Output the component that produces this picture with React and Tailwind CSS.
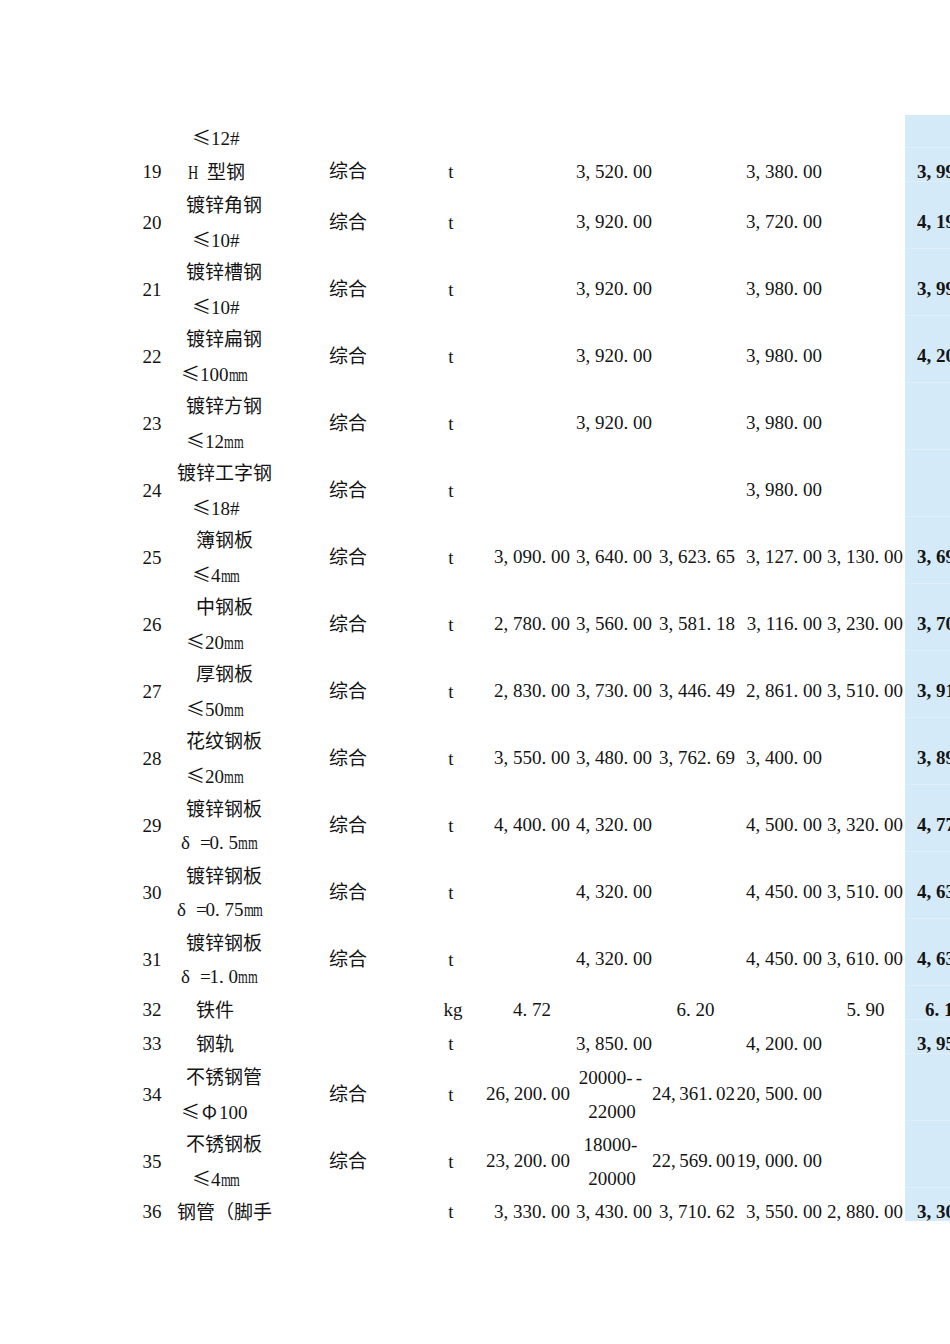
import React from "react";

// half-width / full-width glyph cells so the Latin text keeps the spreadsheet's even pitch
const Txt = ({ s }) =>
  [...s].map((ch, i) => {
    if (/[0-9]/.test(ch)) return ch;
    if (ch === "≤" || ch === "Φ")
      return (
        <span key={i} className="inline-block w-[1em] text-center font-['Noto_Sans_CJK_SC',sans-serif]">
          {ch}
        </span>
      );
    if (ch === "δ")
      return (
        <span key={i} className="inline-block w-[1em] text-left">
          {ch}
        </span>
      );
    if (ch === "m")
      return (
        <span key={i} className="inline-block w-[0.5em] scale-x-[0.66] origin-left">
          {ch}
        </span>
      );
    if (ch === "H")
      return (
        <span key={i} className="inline-block w-[0.5em] scale-x-[0.75] origin-left">
          {ch}
        </span>
      );
    if (ch.charCodeAt(0) < 128)
      return (
        <span key={i} className="inline-block w-[0.5em]">
          {ch}
        </span>
      );
    return ch;
  });

const rows = [
  { kind: "top", name: [["≤12#", "pl-[18px]"]], vals: [] },
  { no: "19", kind: "one", name: [["H 型钢", "pl-[14px]"]], spec: "综合", unit: "t", vals: [null, "3,520.00", null, "3,380.00", null], blue: "3,990.00" },
  { no: "20", kind: "two", name: [["镀锌角钢", "pl-[12px]"], ["≤10#", "pl-[18px]"]], spec: "综合", unit: "t", vals: [null, "3,920.00", null, "3,720.00", null], blue: "4,190.00" },
  { no: "21", kind: "two", name: [["镀锌槽钢", "pl-[12px]"], ["≤10#", "pl-[18px]"]], spec: "综合", unit: "t", vals: [null, "3,920.00", null, "3,980.00", null], blue: "3,990.00" },
  { no: "22", kind: "two", name: [["镀锌扁钢", "pl-[12px]"], ["≤100mm", "pl-[7px]"]], spec: "综合", unit: "t", vals: [null, "3,920.00", null, "3,980.00", null], blue: "4,200.00" },
  { no: "23", kind: "two", name: [["镀锌方钢", "pl-[12px]"], ["≤12mm", "pl-[12px]"]], spec: "综合", unit: "t", vals: [null, "3,920.00", null, "3,980.00", null] },
  { no: "24", kind: "two", name: [["镀锌工字钢", "pl-[3px]"], ["≤18#", "pl-[18px]"]], spec: "综合", unit: "t", vals: [null, null, null, "3,980.00", null] },
  { no: "25", kind: "two", name: [["簿钢板", "pl-[22px]"], ["≤4mm", "pl-[18px]"]], spec: "综合", unit: "t", vals: ["3,090.00", "3,640.00", "3,623.65", "3,127.00", "3,130.00"], blue: "3,690.00" },
  { no: "26", kind: "two", name: [["中钢板", "pl-[22px]"], ["≤20mm", "pl-[12px]"]], spec: "综合", unit: "t", vals: ["2,780.00", "3,560.00", "3,581.18", "3,116.00", "3,230.00"], blue: "3,700.00" },
  { no: "27", kind: "two", name: [["厚钢板", "pl-[22px]"], ["≤50mm", "pl-[12px]"]], spec: "综合", unit: "t", vals: ["2,830.00", "3,730.00", "3,446.49", "2,861.00", "3,510.00"], blue: "3,910.00" },
  { no: "28", kind: "two", name: [["花纹钢板", "pl-[12px]"], ["≤20mm", "pl-[12px]"]], spec: "综合", unit: "t", vals: ["3,550.00", "3,480.00", "3,762.69", "3,400.00", null], blue: "3,890.00" },
  { no: "29", kind: "two", name: [["镀锌钢板", "pl-[12px]"], ["δ=0.5mm", "pl-[7px]"]], spec: "综合", unit: "t", vals: ["4,400.00", "4,320.00", null, "4,500.00", "3,320.00"], blue: "4,770.00" },
  { no: "30", kind: "two", name: [["镀锌钢板", "pl-[12px]"], ["δ=0.75mm", "pl-[3px]"]], spec: "综合", unit: "t", vals: [null, "4,320.00", null, "4,450.00", "3,510.00"], blue: "4,630.00" },
  { no: "31", kind: "two", name: [["镀锌钢板", "pl-[12px]"], ["δ=1.0mm", "pl-[7px]"]], spec: "综合", unit: "t", vals: [null, "4,320.00", null, "4,450.00", "3,610.00"], blue: "4,630.00" },
  { no: "32", kind: "one", name: [["铁件", "pl-[22px]"]], unit: "kg", vals: [{ s: "4.72", c: "justify-center pl-[8px]" }, null, { s: "6.20", c: "justify-center pl-[4px]" }, null, { s: "5.90", c: "justify-center pl-[6px]" }], blue: "6.10", bluePad: "pl-[20px]" },
  { no: "33", kind: "one", name: [["钢轨", "pl-[22px]"]], unit: "t", vals: [null, "3,850.00", null, "4,200.00", null], blue: "3,950.00" },
  { no: "34", kind: "two", name: [["不锈钢管", "pl-[12px]"], ["≤Φ100", "pl-[7px]"]], spec: "综合", unit: "t", vals: ["26,200.00", { lines: ["20000--", "22000"] }, "24,361.02", "20,500.00", null] },
  { no: "35", kind: "two", name: [["不锈钢板", "pl-[12px]"], ["≤4mm", "pl-[18px]"]], spec: "综合", unit: "t", vals: ["23,200.00", { lines: ["18000-", "20000"] }, "22,569.00", "19,000.00", null] },
  { no: "36", kind: "last", name: [["钢管（脚手", "pl-[3px]"]], unit: "t", vals: ["3,330.00", "3,430.00", "3,710.62", "3,550.00", "2,880.00"], blue: "3,300.00" },
];

const colW = ["w-[84px]", "w-[82px]", "w-[83px]", "w-[87px]", "w-[81px]"];

const heights = {
  top: "h-[40px] items-end",
  one: "h-[34px] items-center",
  two: "h-[67px] items-center",
  last: "h-[34px] items-center",
};

const ValCell = ({ v, w }) => {
  if (!v) return <div className={`${w} shrink-0`} />;
  if (typeof v === "string")
    return (
      <div className={`${w} shrink-0 flex justify-end whitespace-nowrap`}>
        <Txt s={v} />
      </div>
    );
  if (v.lines)
    return (
      <div className={`${w} shrink-0 flex flex-col items-center whitespace-nowrap pl-[2px]`}>
        {v.lines.map((l, i) => (
          <div key={i} className="leading-[33.5px]">
            <Txt s={l} />
          </div>
        ))}
      </div>
    );
  return (
    <div className={`${w} shrink-0 flex whitespace-nowrap ${v.c}`}>
      <Txt s={v.s} />
    </div>
  );
};

const Row = ({ r }) => {
  const isLast = r.kind === "last";
  return (
    <div className={`flex ${heights[r.kind]}`}>
      <div className="w-[44px] shrink-0 text-center leading-[33.5px]">{r.no}</div>
      <div className="w-[126px] shrink-0 flex flex-col justify-center">
        {r.name.map(([t, pad], i) => (
          <div key={i} className={`leading-[33px] whitespace-nowrap ${pad}`}>
            <Txt s={t} />
          </div>
        ))}
      </div>
      <div className="w-[120px] shrink-0 pl-[29px] leading-[33.5px]">{r.spec}</div>
      <div className="w-[66px] shrink-0 flex justify-center leading-[33.5px]">
        {r.unit && <Txt s={r.unit} />}
      </div>
      {colW.map((w, i) => (
        <ValCell key={i} v={r.vals[i]} w={w} />
      ))}
      <div className="w-[2px] shrink-0" />
      <div
        className={`relative w-[45px] shrink-0 self-start overflow-hidden bg-[#d5eaf8] flex items-center whitespace-nowrap font-bold ${
          isLast ? "h-[26px]" : "h-full"
        } ${r.bluePad || "pl-[12px]"}`}
      >
        {r.blue && (
          <span className={isLast ? "translate-y-[4px]" : ""}>
            <Txt s={r.blue} />
          </span>
        )}
        {!isLast && <div className="absolute left-0 right-0 bottom-[7px] h-px bg-[#deeffa]" />}
      </div>
    </div>
  );
};

export default function App() {
  return (
    <div className="w-[950px] h-[1344px] overflow-hidden bg-white text-[#141414] text-[19px] font-['Liberation_Serif','Noto_Sans_CJK_SC',serif]">
      <div className="pt-[115px] pl-[130px] flex flex-col">
        {rows.map((r, i) => (
          <Row key={i} r={r} />
        ))}
      </div>
    </div>
  );
}
